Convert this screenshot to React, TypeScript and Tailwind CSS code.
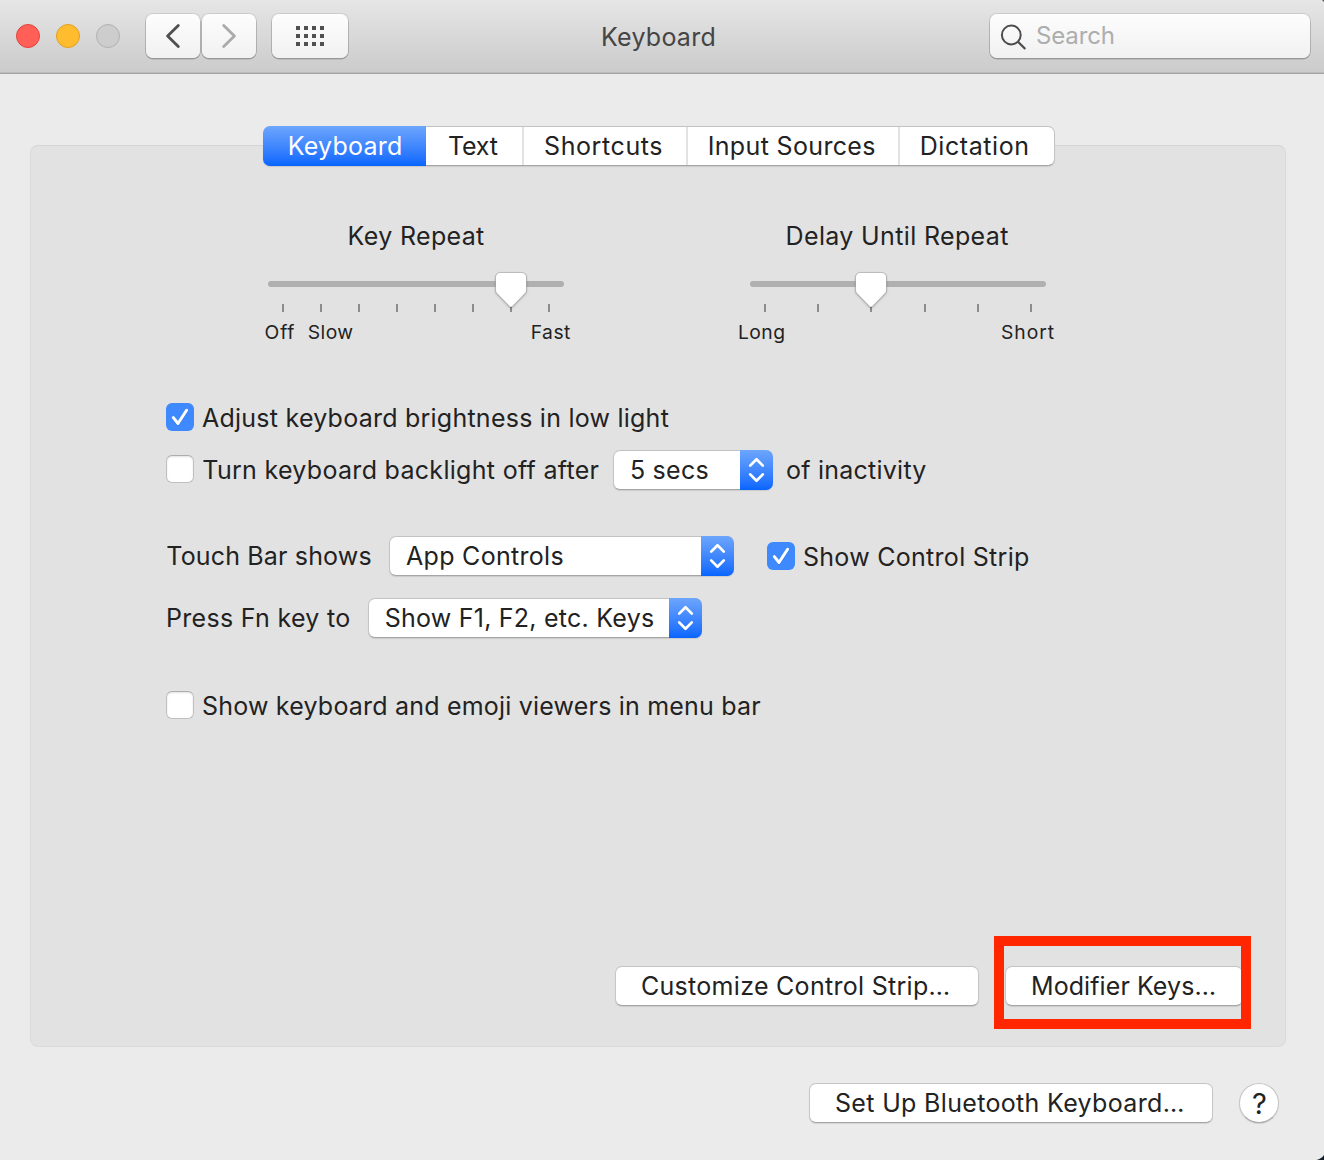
import React from "react";

const fieldShadow =
  "shadow-[0_0_0_1px_rgba(0,0,0,0.09),0_1px_0_0.5px_rgba(0,0,0,0.2)]";

function Chevrons() {
  return (
    <svg width="33" height="40" viewBox="0 0 33 40" fill="none" stroke="#fff" strokeWidth="2.7" strokeLinecap="round" strokeLinejoin="round">
      <path d="M10.2 15.6 16.5 9.3 22.8 15.6" />
      <path d="M10.2 24.4 16.5 30.7 22.8 24.4" />
    </svg>
  );
}

function Select({ className, children }: { className: string; children: React.ReactNode }) {
  return (
    <div className={`relative flex h-10 shrink-0 rounded-[7px] border border-t-[#c2c2c2] border-x-[#c4c4c4] border-b-[#a6a6a6] bg-white shadow-[0_1px_1px_rgba(0,0,0,0.1)] ${className}`}>
      <div className="h-[38px] leading-[38px] whitespace-nowrap">{children}</div>
      <div className="absolute -top-px -right-px h-10 w-[33px] rounded-r-[7px] bg-linear-to-b from-[#6ca5fb] to-[#0565ff]">
        <Chevrons />
      </div>
    </div>
  );
}

function Checkbox({ checked }: { checked?: boolean }) {
  if (checked) {
    return (
      <div className="h-7 w-7 shrink-0 rounded-[6px] bg-[#3d89fd]">
        <svg width="28" height="28" viewBox="0 0 28 28" fill="none" strokeLinecap="round" strokeLinejoin="round">
          <path d="M7.3 15.4 12 21.4 20.6 8.2" stroke="#1b62d0" strokeOpacity="0.45" strokeWidth="3" />
          <path d="M7.3 14.6 12 20.5 20.6 7.3" stroke="#fff" strokeWidth="3" />
        </svg>
      </div>
    );
  }
  return (
    <div className="h-7 w-7 shrink-0 rounded-[6px] border border-[#c0c0c0] border-t-[#adadad] bg-white shadow-[inset_0_1px_2px_rgba(0,0,0,0.12)]" />
  );
}

function Button({ className, children }: { className: string; children: React.ReactNode }) {
  return (
    <button className={`h-10 shrink-0 rounded-[7px] border border-t-[#c4c4c4] border-x-[#c6c6c6] border-b-[#a4a4a4] bg-white text-left leading-[38px] whitespace-nowrap shadow-[0_1px_1px_rgba(0,0,0,0.1)] ${className}`}>
      {children}
    </button>
  );
}

function Slider({ ticks, thumb }: { ticks: number; thumb: number }) {
  return (
    <div className="relative h-[41px] w-[296px] pt-[10px]">
      <div className="h-[6px] rounded-full bg-[#b0b0b0]" />
      <div className="mt-[17px] flex justify-between px-[14px]">
        {Array.from({ length: ticks }, (_, i) => (
          <div key={i} className="h-2 w-[2px] bg-[#8c8c8c]" />
        ))}
      </div>
      <svg className="absolute top-0 drop-shadow-[0_1px_1px_rgba(0,0,0,0.25)]" style={{ left: thumb - 17 }} width="34" height="40" viewBox="0 0 34 40">
        <path d="M6.5 1.5h21a5 5 0 0 1 5 5V18.5c0 1.6-.5 2.9-1.6 4.1L18.400 35.400a2 2 0 0 1-2.800 0L3.100 22.600C2 21.400 1.500 20.100 1.500 18.500V6.500a5 5 0 0 1 5-5Z" fill="#fff" stroke="#000" strokeOpacity="0.2" strokeWidth="1" />
      </svg>
    </div>
  );
}

const tabs = [
  { label: "Text", cls: "w-[98px] pl-[22px] tracking-[-0.2px] border-r-2" },
  { label: "Shortcuts", cls: "w-[164px] pl-[20px] tracking-[0.6px] border-r-2" },
  { label: "Input Sources", cls: "w-[212px] pl-[19.7px] tracking-[0.346px] border-r-2" },
  { label: "Dictation", cls: "w-[154px] pl-[19.7px] tracking-[0.58px]" },
];

export default function App() {
  return (
    <div className="relative flex h-[1160px] w-[1324px] flex-col overflow-hidden bg-[#ebebeb] font-['Inter',sans-serif] text-[25px] text-[#222]">
      <header className="flex h-[74px] shrink-0 items-start border-b border-[#a2a2a2] bg-linear-to-b from-[#e6e6e6] to-[#cbcbcb] pl-4 shadow-[inset_0_-1px_0_#bbbbbb]">
        <div className="mt-6 flex gap-4">
          <span className="h-6 w-6 rounded-full border border-[#e2443d] bg-[#ff5f57]" />
          <span className="h-6 w-6 rounded-full border border-[#dfa023] bg-[#febc2e]" />
          <span className="h-6 w-6 rounded-full border border-[#b1b1b1] bg-[#cdcdcd]" />
        </div>
        <div className={`mt-[14px] ml-[26px] flex h-11 w-[54px] items-center justify-center rounded-[7px] bg-linear-to-b from-[#fdfdfd] to-[#f1f1f1] ${fieldShadow}`}>
          <svg width="54" height="44" viewBox="0 0 54 44" fill="none" stroke="#4f4f4f" strokeWidth="2.8" strokeLinecap="round" strokeLinejoin="round">
            <path d="M32.3 11.4 21.6 22 32.3 32.6" />
          </svg>
        </div>
        <div className={`mt-[14px] ml-[2px] flex h-11 w-[54px] items-center justify-center rounded-[7px] bg-linear-to-b from-[#fdfdfd] to-[#f1f1f1] ${fieldShadow}`}>
          <svg width="54" height="44" viewBox="0 0 54 44" fill="none" stroke="#aaa" strokeWidth="2.8" strokeLinecap="round" strokeLinejoin="round">
            <path d="M21.7 11.4 32.4 22 21.7 32.6" />
          </svg>
        </div>
        <div className={`mt-[14px] ml-[16px] h-11 w-[76px] rounded-[7px] bg-linear-to-b from-[#fdfdfd] to-[#f1f1f1] pt-3 pl-6 ${fieldShadow}`}>
          <div className="grid w-[28px] grid-cols-[4px_4px_4px_4px] gap-1">
            {Array.from({ length: 12 }, (_, i) => (
              <span key={i} className="h-1 w-1 bg-[#505050]" />
            ))}
          </div>
        </div>
        <h1 className="mt-[17px] ml-[253px] w-[389px] leading-10 tracking-[0.25px] text-[#454545]">Keyboard</h1>
        <div className={`mt-[14px] flex h-11 w-[320px] rounded-[7px] bg-linear-to-b from-[#fdfdfd] to-[#f1f1f1] ${fieldShadow}`}>
          <svg width="46" height="44" viewBox="0 0 46 44" fill="none" stroke="#4d4d4d" strokeWidth="2">
            <circle cx="21.3" cy="21" r="9.4" />
            <path d="M28 27.7 35.3 35" strokeWidth="2.3" />
          </svg>
          <span className="text-[24px] leading-[44px] tracking-[-0.15px] text-[#adadad]">Search</span>
        </div>
      </header>

      <nav className="relative z-10 mt-[52px] ml-[263px] flex h-10 w-[792px] shrink-0 leading-10">
        <div className="w-[163px] shrink-0 rounded-l-[7px] bg-linear-to-b from-[#6ca5fb] to-[#0565ff] pl-[24.7px] tracking-[0.25px] text-white shadow-[0_1px_1px_rgba(0,0,0,0.12)]">Keyboard</div>
        <div className="flex w-[629px] shrink-0 overflow-hidden rounded-r-[7px] border border-l-0 border-t-[#c2c2c2] border-r-[#c4c4c4] border-b-[#a6a6a6] bg-white leading-[38px] shadow-[0_1px_1px_rgba(0,0,0,0.1)]">
          {tabs.map((t) => (
            <div key={t.label} className={`shrink-0 border-[#e2e2e2] whitespace-nowrap ${t.cls}`}>{t.label}</div>
          ))}
        </div>
      </nav>

      <main className="-mt-[21px] ml-[30px] flex h-[902px] w-[1256px] shrink-0 flex-col rounded-[8px] border border-[#dadada] border-t-[#d4d4d4] bg-[#e2e2e2] pt-[74px]">
        <section className="flex gap-[186px] pl-[237px]">
          <div className="w-[296px]">
            <h2 className="mb-[19px] pl-[79.6px] leading-8 tracking-[0.34px] whitespace-nowrap">Key Repeat</h2>
            <Slider ticks={8} thumb={243} />
            <div className="mt-px -ml-[3.4px] flex text-[19.3px] leading-[38px] whitespace-nowrap">
              <span className="w-[43.2px] shrink-0 tracking-[0.8px]">Off</span>
              <span className="w-[222.9px] shrink-0 tracking-[0.4px]">Slow</span>
              <span className="tracking-[0.5px]">Fast</span>
            </div>
          </div>
          <div className="w-[296px]">
            <h2 className="mb-[19px] pl-[35.6px] leading-8 tracking-[0.35px] whitespace-nowrap">Delay Until Repeat</h2>
            <Slider ticks={6} thumb={121} />
            <div className="mt-px -ml-3 flex text-[19.3px] leading-[38px] whitespace-nowrap">
              <span className="w-[263px] shrink-0 tracking-[0.45px]">Long</span>
              <span className="tracking-[0.95px]">Short</span>
            </div>
          </div>
        </section>

        <section className="mt-[47px] pl-[135px] whitespace-nowrap">
          <div className="flex h-10 items-start">
            <div className="mt-[5px]"><Checkbox checked /></div>
            <span className="ml-2 leading-10 tracking-[0.24px]">Adjust keyboard brightness in low light</span>
          </div>
          <div className="mt-3 flex h-10 items-start leading-10">
            <div className="mt-[5px]"><Checkbox /></div>
            <span className="ml-[8.3px] w-[410.7px] tracking-[0.305px]">Turn keyboard backlight off after</span>
            <Select className="w-[160px] pl-[15.9px] tracking-[0.25px]">5 secs</Select>
            <span className="ml-[13px] tracking-[0.24px]">of inactivity</span>
          </div>
          <div className="mt-[46px] flex h-10 items-start leading-10">
            <span className="ml-[0.3px] w-[222.7px] tracking-[0.16px]">Touch Bar shows</span>
            <Select className="w-[345px] pl-[16px] tracking-[0.3px]">App Controls</Select>
            <div className="mt-[6px] ml-[33px]"><Checkbox checked /></div>
            <span className="mt-px ml-2 tracking-[0.282px]">Show Control Strip</span>
          </div>
          <div className="mt-[22px] flex h-10 items-start leading-10">
            <span className="w-[202px] tracking-[0.3px]">Press Fn key to</span>
            <Select className="w-[334px] pl-[15.7px] tracking-[0.24px]">Show F1, F2, etc. Keys</Select>
          </div>
          <div className="mt-12 flex h-10 items-start leading-10">
            <div className="mt-[5px]"><Checkbox /></div>
            <span className="ml-2 tracking-[0.2px]">Show keyboard and emoji viewers in menu bar</span>
          </div>
        </section>

        <section className="mt-[210px] flex items-start pl-[584px]">
          <Button className="mt-[30px] w-[364px] pl-[25px] tracking-[0.29px]">Customize Control Strip…</Button>
          <div className="relative ml-[15px] h-[93px] w-[257px] pt-[30px] pl-[11px]">
            <Button className="w-[238px] pl-[25px] tracking-[0.08px]">Modifier Keys…</Button>
            <div className="absolute inset-0 border-[10px] border-[#ff2600]" />
          </div>
        </section>
      </main>

      <footer className="mt-9 flex pl-[809px]">
        <Button className="w-[404px] pl-[25px] tracking-[0.33px]">Set Up Bluetooth Keyboard…</Button>
        <button className="ml-[26px] h-10 w-10 rounded-full border border-[#c6c6c6] border-b-[#a8a8a8] bg-white pl-px text-center text-[29px] leading-[39px] shadow-[0_1px_1px_rgba(0,0,0,0.12)]">?</button>
      </footer>

      <svg className="absolute right-0 bottom-0" width="8" height="5" viewBox="0 0 8 5">
        <path d="M8 0V5H0.5C4 4 6.5 2.5 8 0Z" fill="#141e2b" />
      </svg>
      <svg className="absolute top-0 right-0" width="3" height="3" viewBox="0 0 3 3">
        <path d="M1 0H3V2Z" fill="#555" />
      </svg>
    </div>
  );
}
